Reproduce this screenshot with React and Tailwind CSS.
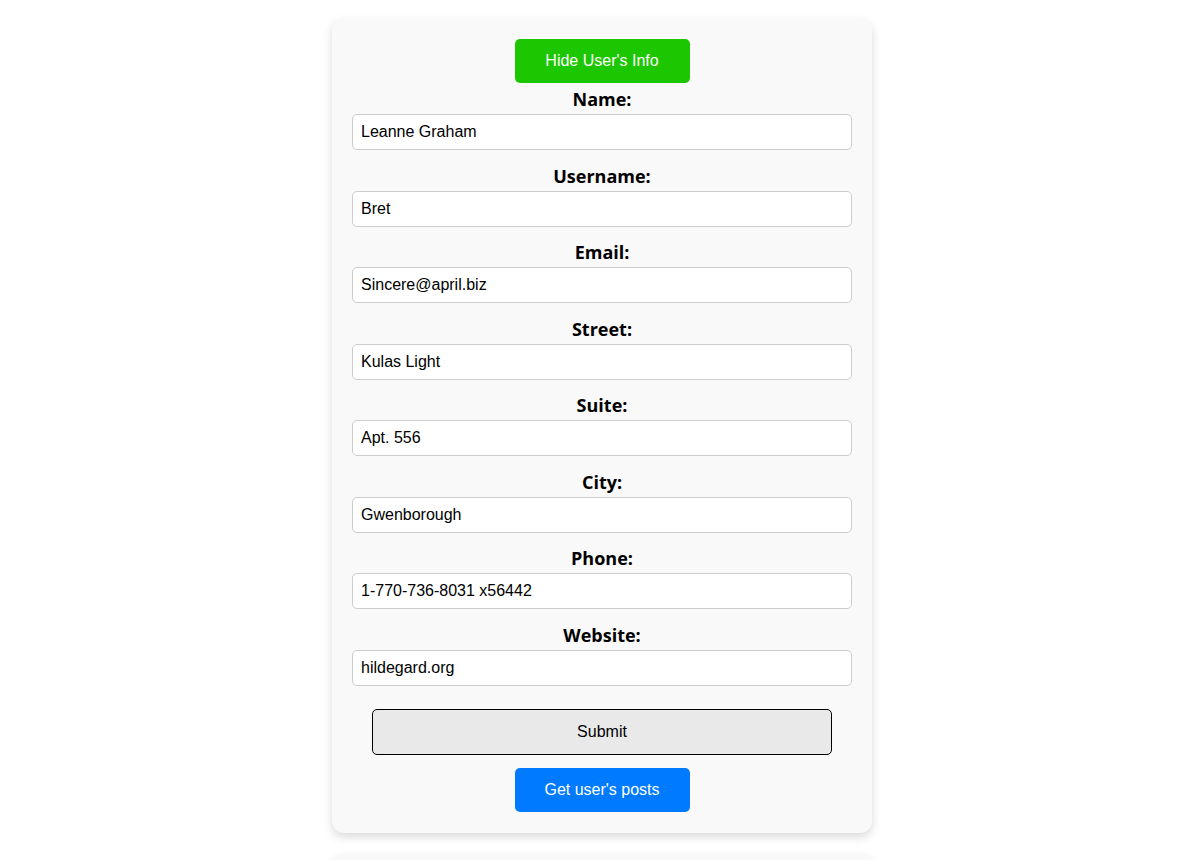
import React from 'react';

const FIELDS = [
  { label: 'Name:', value: 'Leanne Graham' },
  { label: 'Username:', value: 'Bret' },
  { label: 'Email:', value: 'Sincere@april.biz' },
  { label: 'Street:', value: 'Kulas Light' },
  { label: 'Suite:', value: 'Apt. 556' },
  { label: 'City:', value: 'Gwenborough' },
  { label: 'Phone:', value: '1-770-736-8031 x56442' },
  { label: 'Website:', value: 'hildegard.org' },
];

function UserCard() {
  return (
    <div className="w-[540px] bg-[#f9f9f9] rounded-[12px] shadow-[0_4px_10px_rgba(0,0,0,0.15)] px-[20px] pt-[21px] pb-[21px] flex flex-col items-center">
      <button className="w-[175px] h-[44px] bg-[#1cc600] text-white text-[16px] rounded-[5px] mb-[3px]">
        Hide User's Info
      </button>
      <form className="w-full flex flex-col" onSubmit={(e) => e.preventDefault()}>
        {FIELDS.map((f) => (
          <div key={f.label} className="flex flex-col">
            <label className="text-center font-bold text-[18px] leading-[28px] text-black font-['Open_Sans',sans-serif] -mt-[1px] mb-[1px]">
              {f.label}
            </label>
            <input
              className="w-full h-[36px] bg-white border border-[#cccccc] rounded-[5px] px-[8px] text-[16px] text-black mb-[12.5px] outline-none"
              defaultValue={f.value}
            />
          </div>
        ))}
        <div className="flex justify-center mt-[10.5px]">
          <button
            type="submit"
            className="w-[460px] h-[46px] bg-[#e9e9e9] border border-black rounded-[5px] text-[16px] text-black"
          >
            Submit
          </button>
        </div>
      </form>
      <button className="mt-[13px] w-[175px] h-[44px] bg-[#007bff] text-white text-[16px] rounded-[5px]">
        Get user's posts
      </button>
    </div>
  );
}

export default function App() {
  return (
    <div className="min-h-screen bg-white pt-[18px] pl-[24px] flex flex-col items-center gap-[21px] font-['Liberation_Sans',Arial,sans-serif]">
      <UserCard />
      <UserCard />
    </div>
  );
}
